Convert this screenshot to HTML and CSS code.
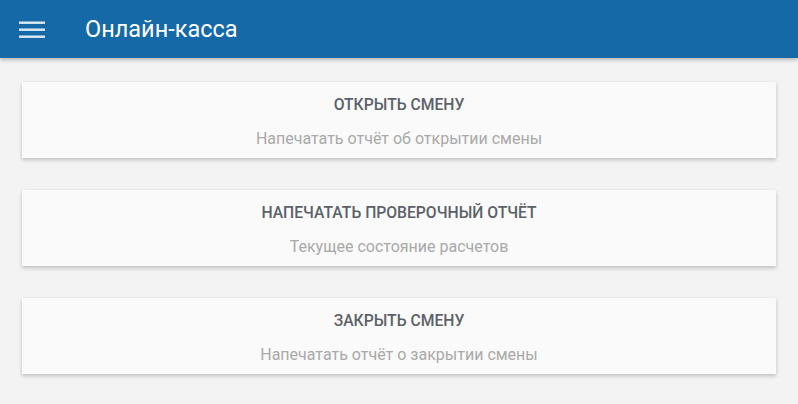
FILE: index.html
```html
<!DOCTYPE html>
<html lang="ru">
<head>
<meta charset="utf-8">
<link rel="stylesheet" href="styles.css">
</head>
<body>
<header class="appbar">
  <button class="menu-btn" aria-label="Меню">
    <svg width="26" height="18" viewBox="0 0 26 18"><rect x="0" y="0.5" width="26" height="2.4" fill="#dfeaf4"/><rect x="0" y="7.5" width="26" height="2.4" fill="#dfeaf4"/><rect x="0" y="14.5" width="26" height="2.4" fill="#dfeaf4"/></svg>
  </button>
  <h1 class="title">Онлайн-касса</h1>
</header>
<main class="content">
  <div class="card">
    <div class="card-title">Открыть смену</div>
    <div class="card-sub">Напечатать отчёт об открытии смены</div>
  </div>
  <div class="card">
    <div class="card-title">Напечатать проверочный отчёт</div>
    <div class="card-sub">Текущее состояние расчетов</div>
  </div>
  <div class="card">
    <div class="card-title">Закрыть смену</div>
    <div class="card-sub">Напечатать отчёт о закрытии смены</div>
  </div>
</main>
</body>
</html>
```
FILE: styles.css
```css
* { box-sizing: border-box; }
html, body { margin: 0; padding: 0; }
body {
  background: #f3f3f3;
  font-family: Roboto, "Noto Sans", sans-serif;
  width: 798px;
  height: 404px;
  overflow: hidden;
}
.appbar {
  height: 58px;
  background: #1669a7;
  display: flex;
  align-items: center;
  box-shadow: 0 2px 4px rgba(0,0,0,0.25);
  position: relative;
  z-index: 1;
}
.menu-btn {
  border: 0;
  background: none;
  padding: 0;
  margin-left: 19px;
  width: 26px;
  height: 18px;
  display: flex;
  margin-top: 1px;
}
.title {
  margin: 0 0 0 40px;
  font-size: 23.5px;
  font-weight: 400;
  color: #ffffff;
}
.content {
  padding: 24px 22px 0;
  display: flex;
  flex-direction: column;
  gap: 32px;
}
.card {
  height: 76px;
  background: #fafafa;
  box-shadow: 0 2px 4px rgba(0,0,0,0.22);
  display: flex;
  flex-direction: column;
  align-items: center;
  padding-top: 13px;
}
.card-title {
  font-size: 15.7px;
  font-weight: 500;
  text-transform: uppercase;
  color: #5c6168;
  line-height: 20px;
}
.card-sub {
  margin-top: 14px;
  font-size: 16px;
  color: #a9a9a9;
  line-height: 20px;
}
```
